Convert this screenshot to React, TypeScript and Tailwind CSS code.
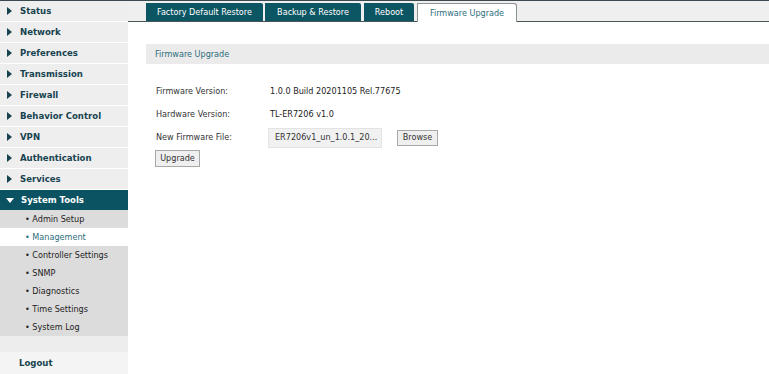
import React from "react";

const menu = [
  "Status",
  "Network",
  "Preferences",
  "Transmission",
  "Firewall",
  "Behavior Control",
  "VPN",
  "Authentication",
  "Services",
];

const sub = [
  { label: "Admin Setup", active: false, bg: "bg-[#dcdcdc]" },
  { label: "Management", active: true, bg: "bg-white" },
  { label: "Controller Settings", active: false, bg: "bg-[#dcdcdc]" },
  { label: "SNMP", active: false, bg: "bg-[#dcdcdc]" },
  { label: "Diagnostics", active: false, bg: "bg-[#dcdcdc]" },
  { label: "Time Settings", active: false, bg: "bg-[#dcdcdc]" },
  { label: "System Log", active: false, bg: "bg-[#dcdcdc]" },
];

const font = "font-['DejaVu_Sans_Condensed','DejaVu_Sans',sans-serif]";

function RightTri() {
  return (
    <svg width="5" height="8" viewBox="0 0 5 8" className="shrink-0">
      <polygon points="0,0 5,4 0,8" fill="#17434f" />
    </svg>
  );
}

function DownTri() {
  return (
    <svg width="8" height="5" viewBox="0 0 8 5" className="shrink-0">
      <polygon points="0,0 8,0 4,5" fill="#ffffff" />
    </svg>
  );
}

export default function App() {
  return (
    <div className={`w-[769px] h-[374px] overflow-hidden bg-white flex flex-col ${font}`}>
      <div className="h-px bg-[#3a4a4f] shrink-0" />
      <div className="flex flex-1 min-h-0">
        {/* Sidebar */}
        <div className="w-[128px] shrink-0 flex flex-col bg-[#efefef]">
          {menu.map((m) => (
            <div
              key={m}
              className="h-[21px] border-b border-white bg-[#eeeeef] flex items-center pl-[7px] gap-[8px]"
            >
              <RightTri />
              <span className="text-[9.5px] font-bold text-[#17434f] leading-none">{m}</span>
            </div>
          ))}
          <div className="h-[20px] bg-[#0b5362] flex items-center pl-[6px] gap-[7px]">
            <DownTri />
            <span className="text-[9.5px] font-bold text-white leading-none">System Tools</span>
          </div>
          {sub.map((s) => (
            <div key={s.label} className={`h-[18px] ${s.bg} flex items-center pl-[25px]`}>
              <span
                className={`text-[9px] leading-none ${s.active ? "text-[#2b6e7c]" : "text-[#222]"}`}
              >
                • {s.label}
              </span>
            </div>
          ))}
          <div className="h-[16px] bg-[#ededed]" />
          <div className="flex-1 bg-[#f4f4f4] flex items-center pl-[19px]">
            <span className="text-[9.5px] font-bold text-[#17434f] leading-none">Logout</span>
          </div>
        </div>

        {/* Content */}
        <div className="flex-1 flex flex-col">
          <div className="h-[21px] bg-[#efefef] border-b border-[#4a5559] flex items-end pl-[18px] gap-[2px] shrink-0">
            <div className="h-[18px] w-[117px] bg-[#0c5563] rounded-tr-[2px] flex items-center justify-center text-white text-[9px] leading-none">
              Factory Default Restore
            </div>
            <div className="h-[18px] w-[96px] bg-[#0c5563] rounded-tr-[2px] flex items-center justify-center text-white text-[9px] leading-none">
              Backup &amp; Restore
            </div>
            <div className="h-[18px] w-[50px] bg-[#0c5563] rounded-tr-[2px] flex items-center justify-center text-white text-[9px] leading-none ml-[1px]">
              Reboot
            </div>
            <div className="h-[19px] w-[100px] bg-white border border-b-0 border-[#8a9396] rounded-tr-[3px] flex items-center justify-center text-[#2b6e7c] text-[9px] leading-none mb-[-1px] ml-[1px]">
              Firmware Upgrade
            </div>
          </div>

          <div className="pl-[18px] pt-[22px]">
            <div className="h-[20px] bg-[#ebebeb] flex items-center pl-[9px] text-[9px] text-[#2b6e7c] leading-none">
              Firmware Upgrade
            </div>

            <div className="pl-[10px] pt-[16px] text-[9px] text-[#222] leading-none">
              <div className="flex items-center h-[23px]">
                <span className="w-[114px] text-[#333]">Firmware Version:</span>
                <span>1.0.0 Build 20201105 Rel.77675</span>
              </div>
              <div className="flex items-center h-[23px]">
                <span className="w-[114px] text-[#333]">Hardware Version:</span>
                <span>TL-ER7206 v1.0</span>
              </div>
              <div className="flex items-center h-[23px]">
                <span className="w-[112px] text-[#333]">New Firmware File:</span>
                <div className="w-[114px] h-[20px] bg-[#f1f1f1] border border-[#e3e3e3] flex items-center pl-[6px] text-[#333]">
                  ER7206v1_un_1.0.1_20...
                </div>
                <button className="ml-[15px] w-[41px] h-[16px] bg-[#efefef] border border-[#a8a8a8] text-[#333] text-[9px] leading-none flex items-center justify-center">
                  Browse
                </button>
              </div>
              <div className="mt-[1px] -ml-[1px]">
                <button className="w-[45px] h-[17px] bg-[#efefef] border border-[#a8a8a8] text-[#333] text-[9px] leading-none flex items-center justify-center">
                  Upgrade
                </button>
              </div>
            </div>
          </div>
        </div>
      </div>
    </div>
  );
}
